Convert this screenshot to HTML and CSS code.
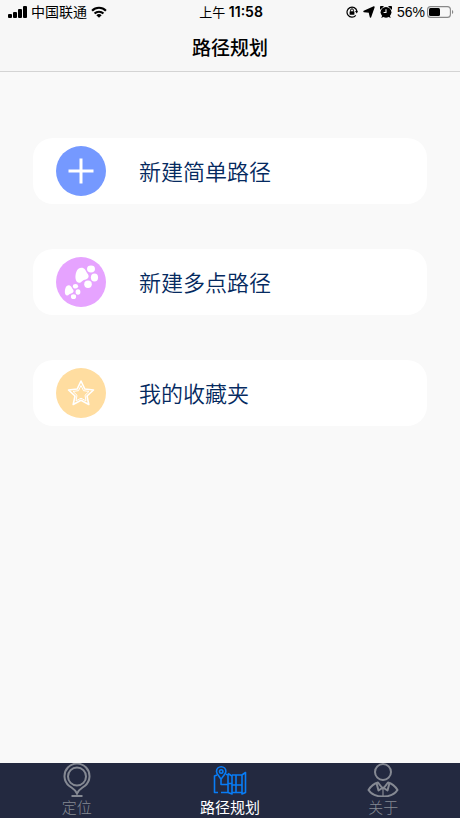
FILE: index.html
```html
<!DOCTYPE html>
<html lang="zh-CN">
<head>
<meta charset="utf-8">
<meta name="viewport" content="width=device-width, initial-scale=1">
<title>路径规划</title>
<link rel="stylesheet" href="styles.css">
</head>
<body>
<header class="header">
  <div class="status">
    <div class="status-left">
      <svg width="20" height="12" viewBox="0 0 20 12"><rect x="0" y="8" width="4" height="4" rx="1"/><rect x="5" y="6" width="4" height="6" rx="1"/><rect x="10" y="3" width="4" height="9" rx="1"/><rect x="15" y="0" width="4" height="12" rx="1"/></svg>
      <span>中国联通</span>
      <svg width="16" height="12" viewBox="0 0 18 13"><g fill="none" stroke="#000" stroke-width="2.4"><path d="M1.2 5a11 11 0 0 1 15.6 0M4 8.3a7 7 0 0 1 10 0"/></g><path d="M6 10.2a4.3 4.3 0 0 1 6 0L9 13z"/></svg>
    </div>
    <div class="time">上午 <b>11:58</b></div>
    <div class="status-right">
      <svg width="12" height="12" viewBox="0 0 12 12"><path d="M9.8 9.4A5 5 0 1 1 10.9 5" fill="none" stroke="#000" stroke-width="1.2"/><path d="M9 5h3l-1.2 2.4z"/><rect x="3.6" y="5.2" width="4.8" height="3.6" rx=".5"/><path d="M4.6 5.5V4.2a1.4 1.4 0 0 1 2.8 0v1.3" fill="none" stroke="#000"/></svg>
      <svg width="12" height="12" viewBox="0 0 12 12"><path d="M11 1 7.500 11 6.300 6 1 5.500z" stroke="#000" stroke-linejoin="round" stroke-width="1.400"/></svg>
      <svg width="12" height="12" viewBox="0 0 12 12"><circle cx="6" cy="6.3" r="5.4"/><path d="M.2 3.800A2 2 0 0 1 3.8.4zM11.8 3.800A2 2 0 0 0 8.2.4zM1.2 12l1.2-2.800 2 1.300zM10.800 12 9.600 9.200l-2 1.300z"/><path d="M6 3.3v3.2H3.6" fill="none" stroke="#f7f7f7" stroke-width="1.1"/></svg>
      <span>56%</span>
      <svg class="battery" width="27" height="12" viewBox="0 0 27 12"><rect x=".6" y=".6" width="22.8" height="10.8" rx="3" fill="none" stroke="#888" stroke-width="1.1"/><rect x="2" y="2" width="11" height="8" rx="1.5"/><path d="M25 4a2.2 2.2 0 0 1 0 4z" fill="#888"/></svg>
    </div>
  </div>
  <h1>路径规划</h1>
</header>
<main class="menu">
  <button class="card" type="button">
    <svg width="50" height="50" viewBox="0 0 50 50"><circle cx="25" cy="25" r="25" fill="#7599ff"/><path d="M25 12.5v25M12.5 25h25" stroke="#fff" stroke-width="3"/></svg>
    <span>新建简单路径</span>
  </button>
  <button class="card" type="button">
    <svg width="50" height="50" viewBox="0 0 50 50"><circle cx="25" cy="25" r="25" fill="#e6a3ff"/><g fill="#fff"><path d="M20.500 14.500c1-4 6.500-5 8.500-2 1.300 2 1.600 3 2.800 4.500 2 3 0 5-3 5.700-3 .700-3.300 3.300-6 3-3.500-.500-4.300-6.500-2.300-11.200z"/><ellipse cx="35" cy="12" rx="4" ry="3.400"/><ellipse cx="38.500" cy="20.500" rx="3.600" ry="4"/><ellipse cx="32" cy="27.300" rx="3.800" ry="3.700"/><path d="M9.500 31c1-3 4-3.500 5.500-1.500 1 1.200 1 2 2 3 1.500 2 0 3.600-2 4-2 .300-2 2-4 2-2.200 0-2.700-4.500-1.500-7.500z"/><ellipse cx="19.500" cy="29.300" rx="2.600" ry="2.300"/><ellipse cx="22" cy="35" rx="2.400" ry="2.700"/><ellipse cx="17.500" cy="39.700" rx="2.600" ry="2.400"/></g></svg>
    <span>新建多点路径</span>
  </button>
  <button class="card" type="button">
    <svg width="50" height="50" viewBox="0 0 50 50"><circle cx="25" cy="25" r="25" fill="#ffdda0"/><g fill="none" stroke="#fff" stroke-linejoin="round"><path d="m25 13 3.800 8 8.700 1-6.500 6 1.800 8.500L25 32.300l-7.800 4.200L19 28l-6.500-6 8.700-1z" stroke-width="1.600"/><path d="m25 17.500 2.500 5.200 5.500.700-4 3.900 1 5.600-5-2.700-5 2.700 1-5.600-4-3.900 5.500-.700z" stroke-width="1"/></g></svg>
    <span>我的收藏夹</span>
  </button>
</main>
<nav class="tabs">
  <a class="tab" href="#location">
    <svg width="34" height="34" viewBox="0 0 34 34" fill="none" stroke="currentColor" stroke-width="2"><path d="M17 30.500c-2-4.500-5-5.300-8-7.800a12.500 12.500 0 1 1 16 0c-3 2.500-6 3.300-8 7.800z"/><circle cx="17" cy="13.500" r="9"/><path d="M11.500 33h11"/></svg>
    <span>定位</span>
  </a>
  <a class="tab active" href="#route" aria-current="page">
    <svg width="34" height="34" viewBox="0 0 34 34" fill="none" stroke="#087cf5" stroke-width="1.600" stroke-linejoin="round"><path d="M8 16.500C6.500 13 3.500 11.500 3.500 8.500a4.700 4.700 0 0 1 9.400 0C12.900 11.500 9.500 13 8 16.500z"/><circle cx="8.200" cy="8.500" r="1.700"/><path d="M4 12 1.500 13v16.500H5M8 29.500h7M13 11.500h2v18l4 1.500V13l-4-2.500M19 12h10M19 29.500h10M23 12v17.500M29 12l3.500-2.500v20L29 31zM8 17v4.500h7M15 20.500h4M19 22h4M23 22h6"/></svg>
    <span>路径规划</span>
  </a>
  <a class="tab" href="#about">
    <svg width="34" height="34" viewBox="0 0 34 34" fill="none" stroke="currentColor" stroke-width="2" stroke-linejoin="round"><circle cx="17" cy="9" r="8"/><path d="M12 19.500C8 20.500 5 23 2.500 27c3 4.500 8 6.500 14.500 6.500S28.500 31.500 31.500 27C29 23 26 20.500 22 19.500L17 26zM10.500 20l2 7.500 4.500-3 4.500 3 2-7.500"/><path d="M17 27v6" stroke-width="1.200"/></svg>
    <span>关于</span>
  </a>
</nav>
</body>
</html>
```
FILE: styles.css
```css
* {
  box-sizing: border-box;
}

body {
  margin: 0;
  min-height: 100vh;
  display: flex;
  flex-direction: column;
  background: #f9f9f9;
  color: #000;
  font-family: "Noto Sans CJK SC", sans-serif;
}

svg {
  display: block;
  flex: none;
}

.header {
  background: #f7f7f7;
  border-bottom: 1px solid #d4d4d4;
}

.status {
  display: grid;
  grid-template-columns: 1fr auto 1fr;
  align-items: center;
  height: 24px;
  padding: 0 6px 0 8px;
  font-family: "Liberation Sans", "Noto Sans CJK SC", sans-serif;
  font-size: 14px;
  line-height: 20px;
}

.status-left,
.status-right {
  display: flex;
  align-items: center;
  gap: 3px;
}

.status-left svg:last-child {
  margin-left: 1px;
}

.status-right {
  justify-content: flex-end;
  gap: 5px;
}

.battery {
  margin-left: -3px;
}

.time {
  font-family: Inter, "Noto Sans CJK SC", sans-serif;
  font-size: 13px;
}

.time b {
  font-size: 14px;
  font-weight: 600;
}

h1 {
  margin: 0;
  padding: 9px 0 10px;
  font-size: 19px;
  font-weight: 500;
  line-height: 28px;
  text-align: center;
}

.menu {
  flex: 1;
  display: flex;
  flex-direction: column;
  gap: 45px;
  padding: 66px 33px;
}

.card {
  display: flex;
  align-items: center;
  gap: 33px;
  height: 66px;
  padding: 0 23px;
  border: 0;
  border-radius: 20px;
  background: #fff;
  color: #052a60;
  font-family: inherit;
  font-size: 22px;
  font-weight: 350;
  line-height: 32px;
  text-align: left;
  cursor: pointer;
}

.card span {
  padding-bottom: 2px;
}

.tabs {
  display: grid;
  grid-template-columns: repeat(3, 1fr);
  height: 55px;
  background: #232940;
}

.tab {
  display: flex;
  flex-direction: column;
  align-items: center;
  gap: 1px;
  color: #858993;
  font-size: 15px;
  font-weight: 300;
  line-height: 18px;
  text-decoration: none;
}

.active {
  color: #fff;
  font-weight: 400;
}
```
